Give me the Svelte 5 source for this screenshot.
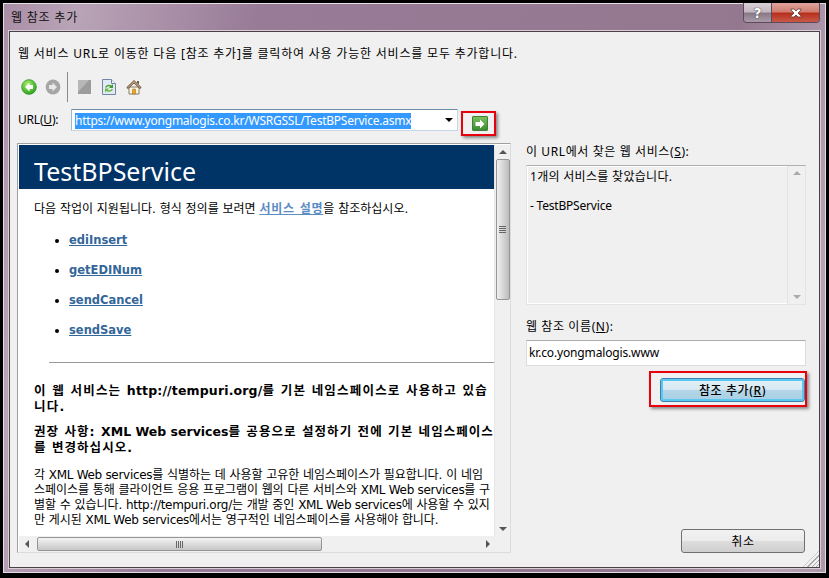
<script>
	const methods = ['ediInsert', 'getEDINum', 'sendCancel', 'sendSave'];
</script>

<div class="window">
	<div class="titlebar">
		<span class="title">웹 참조 추가</span>
		<div class="caption">
			<div class="help">?</div>
			<div class="close">
				<svg width="16" height="12" viewBox="0 0 16 12">
					<path d="M3 2h3l2 2 2-2h3v1l-3 3 3 3v1h-3l-2-2-2 2H3V9l3-3-3-3z" fill="#fff" stroke="#5a3a3a" stroke-width="0.8" />
				</svg>
			</div>
		</div>
	</div>

	<div class="client">
		<p class="intro">웹 서비스 URL로 이동한 다음 [참조 추가]를 클릭하여 사용 가능한 서비스를 모두 추가합니다.</p>

		<div class="toolbar">
			<svg class="tool" width="16" height="16" viewBox="0 0 16 16">
				<defs>
					<radialGradient id="gb" cx="0.4" cy="0.3" r="0.8">
						<stop offset="0" stop-color="#a5ec6a" />
						<stop offset="1" stop-color="#1c9a12" />
					</radialGradient>
				</defs>
				<circle cx="8" cy="8" r="7.4" fill="url(#gb)" stroke="#2f8a26" stroke-width="0.6" />
				<path d="M8.500 3.500 4 8l4.500 4.500V10H12V6H8.500z" fill="#fff" />
			</svg>
			<svg class="tool dim" width="16" height="16" viewBox="0 0 16 16">
				<circle cx="8" cy="8" r="7.400" fill="#a6a6a6" />
				<path d="M7.500 3.500 12 8l-4.500 4.500V10H4V6h3.500z" fill="#e8e8e8" />
			</svg>
			<div class="sep"></div>
			<svg class="tool stop" width="13" height="14" viewBox="0 0 13 14">
				<rect width="13" height="14" fill="#9c9c9c" />
				<path d="M0 0h11L0 12z" fill="#b8b8b8" />
			</svg>
			<svg class="tool refresh" width="14" height="16" viewBox="0 0 14 16">
				<path d="M.500.500h9l4 4v11H.500z" fill="#e4eaf4" stroke="#6f86a8" />
				<path d="M9.500.500v4h4" fill="#fff" stroke="#6f86a8" />
				<path d="M3 8.500a4 3.500 0 0 1 6.500-2L11 5v4H7l1.400-1.400A2.500 2 0 0 0 4.500 8.500z" fill="#3f9f2b" />
				<path d="M11 10a4 3.500 0 0 1-6.500 2L3 13.500v-4h4l-1.400 1.400a2.500 2 0 0 0 3.900-.9z" fill="#6cbb3c" />
			</svg>
			<svg class="tool home" width="16" height="16" viewBox="0 0 16 16">
				<path d="M3 8h10v7H3z" fill="#fbf6e6" stroke="#6f5c3c" stroke-width="0.8" />
				<path d="M6.500 10h3v5h-3z" fill="#eda51c" stroke="#9a6a12" stroke-width="0.5" />
				<path d="M.8 8.500 8 1.500l7.200 7-1.200 1L8 4 2 9.500z" fill="#c9a880" stroke="#4f3a26" stroke-width="0.8" />
				<path d="M11 2h2v3.500l-2-2z" fill="#6f5c3c" />
			</svg>
		</div>

		<div class="urlrow">
			<span class="urllabel">URL(<u>U</u>):</span>
			<div class="urlbox">
				<span class="selected">https://www.yongmalogis.co.kr/WSRGSSL/TestBPService.asmx</span>
				<span class="arrow"></span>
			</div>
			<div class="gobox">
				<div class="go">
					<svg width="12" height="12" viewBox="0 0 12 12">
						<path d="M6 1.500 10.500 6 6 10.500V8H1.500V4H6z" fill="#fff" />
					</svg>
				</div>
			</div>
		</div>

		<div class="main">
			<div class="browser">
				<div class="view">
					<div class="page">
						<div class="heading">TestBPService</div>
						<div class="content">
							<p class="lead">다음 작업이 지원됩니다. 형식 정의를 보려면 <b class="link ko">서비스 설명</b>을 참조하십시오.</p>
							<ul>
								{#each methods as m}
									<li><span class="link">{m}</span></li>
								{/each}
							</ul>
							<div class="rule"></div>
							<p class="strong first">이 웹 서비스는 <span class="lat">http://tempuri.org/</span>를 기본 네임스페이스로 사용하고 있습<br />니다.</p>
							<p class="strong second">권장 사항: <span class="lat">XML Web services</span>를 공용으로 설정하기 전에 기본 네임스페이스<br />를 변경하십시오.</p>
							<p class="body">각 <span class="lat">XML Web services</span>를 식별하는 데 사용할 고유한 네임스페이스가 필요합니다. 이 네임<br />스페이스를 통해 클라이언트 응용 프로그램이 웹의 다른 서비스와 <span class="lat">XML Web services</span>를 구<br />별할 수 있습니다. <span class="lat">http://tempuri.org/</span>는 개발 중인 <span class="lat">XML Web services</span>에 사용할 수 있지<br />만 게시된 <span class="lat">XML Web services</span>에서는 영구적인 네임스페이스를 사용해야 합니다.</p>
						</div>
					</div>
					<div class="vscroll">
						<span class="up"></span>
						<div class="vthumb"><i></i><i></i><i></i><i></i></div>
						<span class="down"></span>
					</div>
				</div>
				<div class="hscroll">
					<span class="left"></span>
					<div class="hthumb"><i></i><i></i><i></i><i></i></div>
					<span class="right"></span>
				</div>
			</div>

			<div class="side">
				<label class="found">이 URL에서 찾은 웹 서비스(<u>S</u>):</label>
				<div class="results">
					<div class="results-text">
						<p>1개의 서비스를 찾았습니다.</p>
						<p class="svc">- TestBPService</p>
					</div>
					<div class="rscroll">
						<span class="up light"></span>
						<span class="down light"></span>
					</div>
				</div>
				<label class="namelabel">웹 참조 이름(<u>N</u>):</label>
				<div class="namebox">kr.co.yongmalogis.www</div>
				<div class="addrow">
					<div class="addbox">
						<div class="btn add">참조 추가(<u>R</u>)</div>
					</div>
				</div>
				<div class="spacer"></div>
				<div class="cancelrow">
					<div class="btn cancel">취소</div>
				</div>
			</div>
		</div>
		<div class="grip"></div>
	</div>
</div>

<style>
	:global(body) {
		margin: 0;
		background: #000;
	}

	.window {
		width: 829px;
		height: 578px;
		box-sizing: border-box;
		border: solid #000;
		border-width: 3px 3px 5px 3px;
		padding: 0 6px 5px 6px;
		display: flex;
		flex-direction: column;
		background: linear-gradient(100deg, #a98ea6 0, #b9a4b7 8%, #987b97 28%, #94788f 80%, #b7a3b4 94%, #ad97aa 100%);
		box-shadow: inset 0 0 0 1px #e6dde6;
		font-family: 'Noto Sans', 'Noto Sans CJK KR', sans-serif;
		font-size: 12px;
		color: #000;
		overflow: hidden;
	}

	.titlebar {
		height: 28px;
		flex: none;
		position: relative;
		display: flex;
		align-items: center;
		padding-left: 2px;
	}

	.title {
		color: #111;
		letter-spacing: 0.8px;
		margin-bottom: 1px;
	}

	.caption {
		position: absolute;
		right: 0;
		top: 0;
		height: 19px;
		display: flex;
		border: 1px solid #5c4a5c;
		border-top: none;
		border-radius: 0 0 4px 4px;
		overflow: hidden;
	}

	.help {
		width: 27px;
		display: flex;
		align-items: center;
		justify-content: center;
		font: bold 14px 'DejaVu Sans', sans-serif;
		color: #fff;
		text-shadow: 0 0 1px #333, 0 0 1px #333;
		background: linear-gradient(#d9d0d8 0, #c4b8c2 45%, #8a7a88 55%, #a99ba7 100%);
		border-right: 1px solid #5c4a5c;
	}

	.close {
		width: 47px;
		display: flex;
		align-items: center;
		justify-content: center;
		background: linear-gradient(#e0a49c 0, #d07f72 45%, #b8301c 55%, #c85a48 100%);
	}

	.client {
		flex: 1;
		min-height: 0;
		position: relative;
		background: #f0f0f0;
		border: 1px solid #4a4048;
		outline: 1px solid #d9ced8;
		display: flex;
		flex-direction: column;
	}

	.intro {
		margin: 14px 0 0 8px;
		line-height: 16px;
		letter-spacing: 0.8px;
		white-space: nowrap;
	}

	.toolbar {
		display: flex;
		align-items: center;
		height: 32px;
		margin: 9px 0 0 11px;
	}

	.tool.dim {
		margin-left: 8px;
	}

	.sep {
		width: 1px;
		height: 30px;
		background: #8a8a8a;
		margin-left: 6px;
	}

	.stop {
		margin-left: 10px;
	}

	.refresh {
		margin-left: 11px;
	}

	.home {
		margin-left: 10px;
	}

	.urlrow {
		display: flex;
		align-items: flex-start;
		margin: 6px 0 0 8px;
		height: 27px;
	}

	.urllabel {
		width: 53px;
		flex: none;
		white-space: nowrap;
		line-height: 22px;
		letter-spacing: -0.2px;
	}

	.urlbox {
		width: 382px;
		height: 20px;
		flex: none;
		background: #fff;
		border: 1px solid;
		border-color: #6e8ca8 #c4d6e6 #c4d6e6 #a0b8cc;
		border-radius: 1px;
		display: flex;
		align-items: center;
		padding-left: 3px;
		position: relative;
	}

	.selected {
		background: #3399ff;
		color: #fff;
		line-height: 16px;
		letter-spacing: -0.23px;
		white-space: nowrap;
		margin-top: 1px;
	}

	.arrow {
		position: absolute;
		right: 4px;
		top: 8px;
		border: 4px solid transparent;
		border-top: 4px solid #000;
		border-bottom: none;
	}

	.gobox {
		width: 31px;
		height: 21px;
		margin: 2px 0 0 3px;
		border: 2px solid #e8000c;
		box-shadow: 2px 2px 3px #888;
		display: flex;
		align-items: center;
		justify-content: center;
		flex: none;
	}

	.go {
		width: 14px;
		height: 13px;
		margin-left: 2px;
		border-radius: 1px;
		background: linear-gradient(#7cc05c, #3c8c34);
		border: 1px solid #3f7f38;
		display: flex;
		align-items: center;
		justify-content: center;
	}

	.main {
		flex: 1;
		min-height: 0;
		display: flex;
		margin: 7px 0 0 7px;
	}

	.browser {
		width: 491px;
		height: 407px;
		flex: none;
		border: 1px solid #a0a0a0;
		border-bottom-color: #dcdcdc;
		border-right-color: #dcdcdc;
		background: #fff;
		display: flex;
		flex-direction: column;
		padding: 1px 0 0 1px;
		box-sizing: content-box;
	}

	.view {
		flex: 1;
		min-height: 0;
		display: flex;
	}

	.page {
		flex: 1;
		min-width: 0;
		overflow: hidden;
		background: #fff;
		font-family: 'DejaVu Sans', 'Noto Sans CJK KR', sans-serif;
		font-size: 12px;
	}

	.heading {
		height: 44px;
		background: #003366;
		color: #fff;
		font: 25px/52px 'Noto Sans', sans-serif;
		padding-left: 15px;
		overflow: hidden;
	}

	.content {
		padding-left: 15px;
		white-space: nowrap;
	}

	.lead {
		margin: 12px 0 0;
		line-height: 16px;
	}

	.link {
		color: #336699;
		font-weight: bold;
		font-size: 11.5px;
		text-decoration: underline;
	}

	.link.ko {
		color: #5b8cc4;
		font-size: 12px;
		letter-spacing: 0.75px;
	}

	ul {
		margin: 15px 0 0;
		padding: 0 0 0 35px;
		list-style: disc;
	}

	li {
		height: 30px;
		line-height: 16px;
	}

	.rule {
		height: 1px;
		background: #999;
		margin: 10px 0 0 15px;
	}

	.strong {
		font-weight: bold;
		font-size: 12.5px;
		line-height: 16px;
		margin: 0;
	}

	.strong .lat {
		letter-spacing: 0;
	}

	.first {
		margin-top: 20px;
		letter-spacing: 1.2px;
	}

	.first .lat {
		letter-spacing: 0.15px;
	}

	.second {
		margin-top: 9px;
		letter-spacing: 1.05px;
	}

	.body {
		margin: 12px 0 0;
		line-height: 15px;
		letter-spacing: -0.05px;
	}

	.body .lat {
		letter-spacing: -0.3px;
	}

	.vscroll {
		width: 15px;
		flex: none;
		background: #f0f0f0;
		display: flex;
		flex-direction: column;
		align-items: center;
		border-left: 1px solid #e6e6e6;
	}

	.up {
		border: 4px solid transparent;
		border-bottom: 4px solid #555;
		border-top: none;
		margin-top: 5px;
		flex: none;
	}

	.up.light {
		border-bottom-color: #aaa;
	}

	.down {
		border: 4px solid transparent;
		border-top: 4px solid #555;
		border-bottom: none;
		margin-top: auto;
		margin-bottom: 5px;
		flex: none;
	}

	.down.light {
		border-top-color: #aaa;
	}

	.vthumb {
		width: 14px;
		height: 141px;
		margin-top: 5px;
		border: 1px solid #969696;
		border-radius: 2px;
		box-sizing: border-box;
		background: linear-gradient(90deg, #f0f0f0, #d6d6d6 50%, #bcbcbc);
		display: flex;
		flex-direction: column;
		align-items: center;
		justify-content: center;
		gap: 1px;
		flex: none;
	}

	.vthumb i {
		width: 7px;
		height: 1px;
		background: #666;
	}

	.hscroll {
		height: 16px;
		flex: none;
		background: #f0f0f0;
		display: flex;
		align-items: center;
		padding-left: 6px;
	}

	.left {
		border: 4px solid transparent;
		border-right: 4px solid #555;
		border-left: none;
	}

	.right {
		border: 4px solid transparent;
		border-left: 4px solid #555;
		border-right: none;
		margin-left: auto;
		margin-right: 20px;
	}

	.hthumb {
		width: 285px;
		height: 14px;
		margin-left: 8px;
		border: 1px solid #969696;
		border-radius: 2px;
		box-sizing: border-box;
		background: linear-gradient(#f4f4f4, #dcdcdc 50%, #c6c6c6);
		display: flex;
		align-items: center;
		justify-content: center;
		gap: 1px;
	}

	.hthumb i {
		width: 1px;
		height: 7px;
		background: #666;
	}

	.side {
		margin-left: 15px;
		width: 280px;
		height: 410px;
		flex: none;
		display: flex;
		flex-direction: column;
	}

	label {
		line-height: 16px;
		letter-spacing: 0.6px;
		white-space: nowrap;
	}

	.found {
		margin-top: 1px;
	}

	.results {
		height: 138px;
		flex: none;
		margin-top: 5px;
		border: 1px solid #e4e4e4;
		border-top: 1px solid #b0b0b0;
		display: flex;
		box-shadow: inset 0 0 0 1px #fff;
	}

	.results-text {
		flex: 1;
		padding: 2px 3px;
		margin-top: 1px;
	}

	.results-text p {
		margin: 0;
		line-height: 16px;
		letter-spacing: 0.3px;
		white-space: nowrap;
	}

	.results-text .svc {
		margin-top: 13px;
		letter-spacing: -0.2px;
	}

	.rscroll {
		width: 17px;
		background: #f0f0f0;
		border-left: 1px solid #e4e4e4;
		display: flex;
		flex-direction: column;
		align-items: center;
	}

	.namelabel {
		margin-top: 14px;
	}

	.namebox {
		height: 24px;
		flex: none;
		margin-top: 5px;
		background: #fff;
		border: 1px solid #dcdcdc;
		border-top-color: #acacac;
		padding-left: 2px;
		line-height: 23px;
		letter-spacing: -0.15px;
	}

	.addrow {
		display: flex;
		justify-content: flex-end;
		margin: 5px -1px 0 0;
	}

	.addbox {
		width: 158px;
		height: 36px;
		box-sizing: border-box;
		border: 2px solid #e8000c;
		box-shadow: 2px 2px 3px #888;
		padding: 5px 0 3px 9px;
		display: flex;
		flex: none;
	}

	.btn {
		display: flex;
		align-items: center;
		justify-content: center;
		box-sizing: border-box;
		border-radius: 3px;
		letter-spacing: 0.6px;
	}

	.add {
		flex: 1;
		height: 24px;
		border: 1px solid #3c7fb1;
		box-shadow: inset 0 0 0 2px #5cc8f0;
		background: linear-gradient(#e4f2f8 0, #d6e8f2 48%, #b4d6e8 52%, #a8cfe4 100%);
		font-weight: 500;
	}

	.spacer {
		flex: 1;
	}

	.cancelrow {
		display: flex;
		justify-content: flex-end;
		padding-right: 1px;
	}

	.cancel {
		width: 124px;
		height: 24px;
		border: 1px solid #707070;
		background: linear-gradient(#f2f2f2 0, #ebebeb 48%, #dddddd 52%, #cfcfcf 100%);
	}

	.grip {
		position: absolute;
		right: 0;
		bottom: 0;
		width: 16px;
		height: 16px;
		background: repeating-linear-gradient(135deg, #f0f0f0 0 2px, #a8a8a8 2px 3px);
		clip-path: polygon(100% 0, 100% 100%, 0 100%);
	}
</style>
